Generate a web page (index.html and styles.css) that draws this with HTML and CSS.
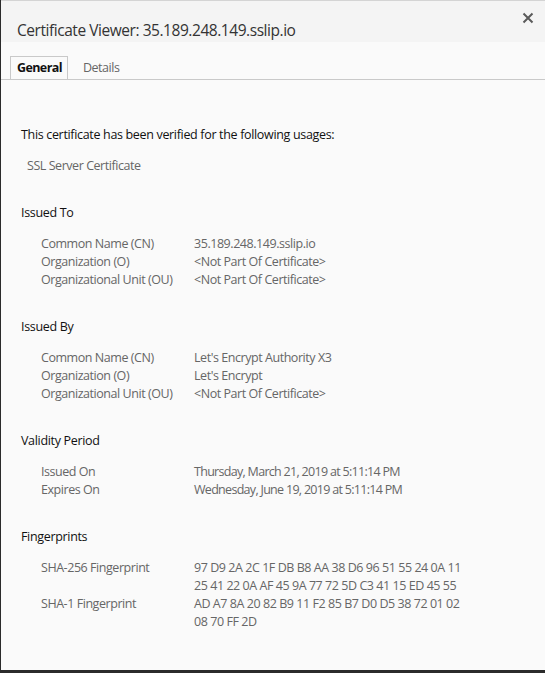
FILE: index.html
```html
<!DOCTYPE html>
<html>
<head>
<meta charset="utf-8">
<link rel="stylesheet" href="styles.css">
</head>
<body>
<div class="dialog">
  <div class="header">
    <div class="title">Certificate Viewer: 35.189.248.149.sslip.io</div>
    <button class="close" aria-label="Close">
      <svg width="12" height="12" viewBox="0 0 12 12"><path d="M1.5 1.5 L10.5 10.5 M10.5 1.5 L1.5 10.5" stroke="#5a5a5a" stroke-width="2" fill="none"/></svg>
    </button>
  </div>
  <div class="tabs">
    <div class="tab active">General</div>
    <div class="tab">Details</div>
  </div>
  <div class="content">
    <div class="heading">This certificate has been verified for the following usages:</div>
    <div class="usage">SSL Server Certificate</div>

    <div class="heading">Issued To</div>
    <div class="rows">
      <div class="label">Common Name (CN)</div><div class="value">35.189.248.149.sslip.io</div>
      <div class="label">Organization (O)</div><div class="value">&lt;Not Part Of Certificate&gt;</div>
      <div class="label">Organizational Unit (OU)</div><div class="value">&lt;Not Part Of Certificate&gt;</div>
    </div>

    <div class="heading">Issued By</div>
    <div class="rows">
      <div class="label">Common Name (CN)</div><div class="value">Let's Encrypt Authority X3</div>
      <div class="label">Organization (O)</div><div class="value">Let's Encrypt</div>
      <div class="label">Organizational Unit (OU)</div><div class="value">&lt;Not Part Of Certificate&gt;</div>
    </div>

    <div class="heading">Validity Period</div>
    <div class="rows">
      <div class="label">Issued On</div><div class="value date">Thursday, March 21, 2019 at 5:11:14 PM</div>
      <div class="label">Expires On</div><div class="value date">Wednesday, June 19, 2019 at 5:11:14 PM</div>
    </div>

    <div class="heading">Fingerprints</div>
    <div class="rows">
      <div class="label">SHA-256 Fingerprint</div><div class="value">97 D9 2A 2C 1F DB B8 AA 38 D6 96 51 55 24 0A 11<br>25 41 22 0A AF 45 9A 77 72 5D C3 41 15 ED 45 55</div>
      <div class="label">SHA-1 Fingerprint</div><div class="value">AD A7 8A 20 82 B9 11 F2 85 B7 D0 D5 38 72 01 02<br>08 70 FF 2D</div>
    </div>
  </div>
</div>
</body>
</html>
```
FILE: styles.css
```css
html, body {
  margin: 0;
  padding: 0;
  background: #2b2b2b;
  width: 545px;
  height: 673px;
  overflow: hidden;
}
.dialog {
  margin-left: 1px;
  width: 544px;
  height: 669px;
  border-top: 1px solid #d4d4d4;
  background: #fafafa;
  font-family: "Open Sans", sans-serif;
  font-size: 12.5px;
  letter-spacing: -0.45px;
  color: #666;
}
.header {
  height: 41px;
  background: #f4f4f4;
  display: flex;
  justify-content: space-between;
}
.title {
  font-size: 15.5px;
  letter-spacing: -0.45px;
  color: #333;
  padding: 18px 0 0 16px;
  line-height: 22px;
}
.close {
  border: none;
  background: none;
  padding: 0;
  margin: 11px 11px 0 0;
  width: 12px;
  height: 12px;
  display: flex;
}
.tabs {
  margin-top: 14px;
  height: 23px;
  border-bottom: 1px solid #c9c9c9;
  display: flex;
  padding-left: 9px;
}
.tab {
  padding: 0 7px;
  line-height: 23px;
  color: #666;
}
.tab.active {
  border: 1px solid #c9c9c9;
  border-bottom: none;
  background: #fafafa;
  color: #111;
  font-weight: 700;
  letter-spacing: -0.6px;
  padding: 0 5px 0 6px;
  line-height: 22px;
  margin-bottom: -1px;
  height: 23px;
  box-sizing: border-box;
  margin-right: 8px;
}
.content {
  padding: 46px 0 0 20px;
  line-height: 18px;
}
.heading {
  color: #111;
  letter-spacing: -0.33px;
  margin-bottom: 13px;
}
.usage {
  padding-left: 6px;
  margin-bottom: 29px;
}
.rows {
  display: grid;
  grid-template-columns: 153px auto;
  padding-left: 20px;
  margin-bottom: 29px;
}
.date {
  letter-spacing: -0.7px;
}
```
